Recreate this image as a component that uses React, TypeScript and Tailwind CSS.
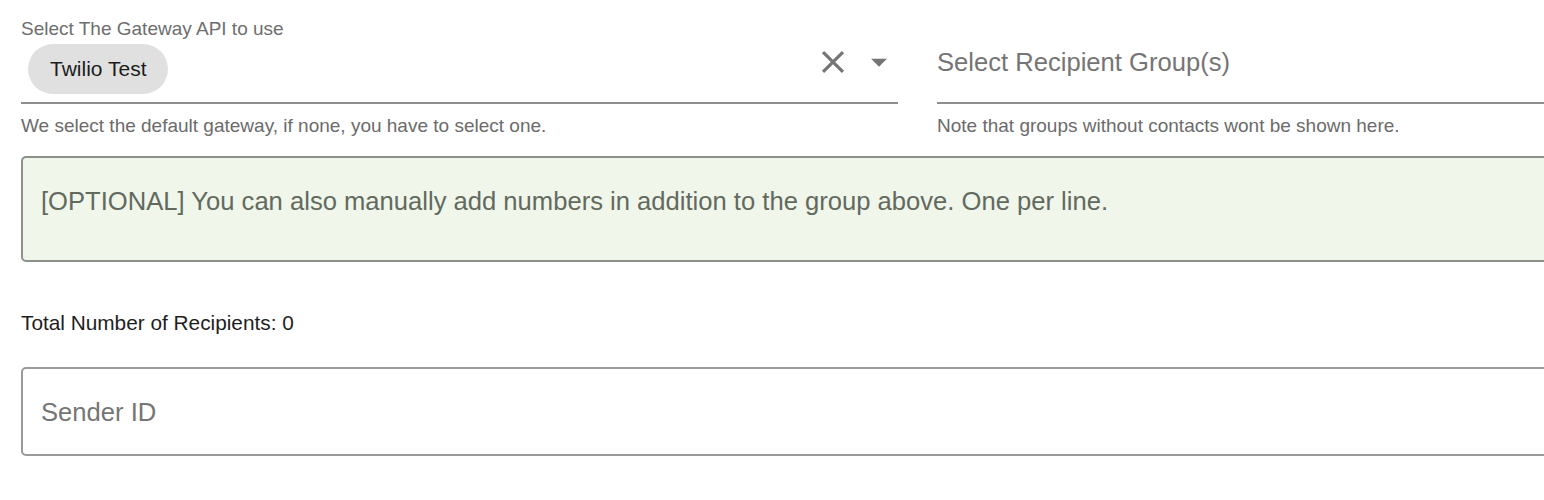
export default function App() {
  return (
    <div className="w-[1544px] h-[500px] overflow-hidden bg-white font-['Liberation_Sans',Arial,sans-serif]">
      <div className="w-[1814px] pl-[21px]">
        <div className="grid grid-cols-[877px_877px] gap-x-[39px]">
          {/* gateway select */}
          <div>
            <div className="pt-[18px] text-[19px] leading-[22px] text-[#6e6e6e]">Select The Gateway API to use</div>
            <div className="flex items-center h-[64px] border-b-2 border-[#8e8e8e] pt-[4px] pb-[8px]">
              <div className="ml-[7px] h-[50px] px-[22px] rounded-full bg-[#e0e0e0] flex items-center text-[21px] text-[#1c1c1c]">
                Twilio Test
              </div>
              <div className="ml-auto mb-[14px] flex items-center gap-[8px]">
                <svg className="w-[38px] h-[38px]" viewBox="0 0 24 24" fill="#757575">
                  <path d="M19 6.41L17.59 5 12 10.59 6.41 5 5 6.41 10.59 12 5 17.59 6.41 19 12 13.41 17.59 19 19 17.59 13.41 12z" />
                </svg>
                <svg className="w-[38px] h-[38px]" viewBox="0 0 24 24" fill="#757575">
                  <path d="M7 10l5 5 5-5z" />
                </svg>
              </div>
            </div>
            <div className="mt-[11px] text-[19px] leading-[22px] text-[#6b6b6b]">
              We select the default gateway, if none, you have to select one.
            </div>
          </div>

          {/* recipient groups */}
          <div>
            <div className="h-[104px] flex items-end border-b-2 border-[#8e8e8e] pb-[25px]">
              <span className="text-[25.6px] leading-[30px] text-[#757575]">Select Recipient Group(s)</span>
            </div>
            <div className="mt-[11px] text-[19px] leading-[22px] text-[#6b6b6b]">
              Note that groups without contacts wont be shown here.
            </div>
          </div>
        </div>

        <div className="mt-[19px] h-[106px] rounded-[5px] border-2 border-[#8c918a] bg-[#f0f6ea] px-[18px] pt-[28px]">
          <span className="text-[25.6px] leading-[30px] text-[#626a5f]">
            [OPTIONAL] You can also manually add numbers in addition to the group above. One per line.
          </span>
        </div>

        <div className="mt-[49px] text-[20.8px] leading-[24px] text-[#1e1e1e]">Total Number of Recipients: 0</div>

        <div className="mt-[32px] h-[89px] rounded-[5px] border-2 border-[#9a9a9a] flex items-center px-[18px]">
          <span className="text-[25.6px] leading-[30px] text-[#757575]">Sender ID</span>
        </div>
      </div>
    </div>
  );
}
